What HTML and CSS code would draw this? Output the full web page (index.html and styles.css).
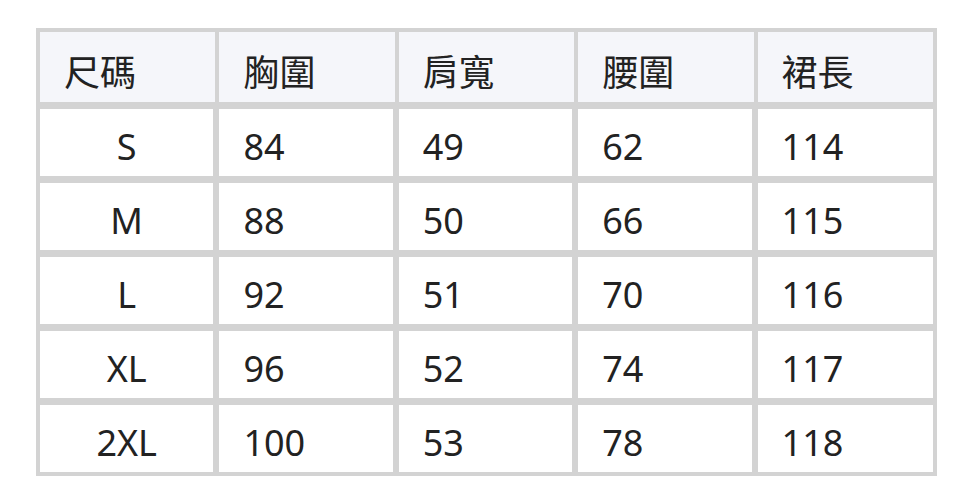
FILE: index.html
```html
<!DOCTYPE html>
<html lang="zh-Hant">
<head>
<meta charset="utf-8">
<title>尺碼表</title>
<link rel="stylesheet" href="styles.css">
</head>
<body>
<table class="size-table">
  <thead>
    <tr><th>尺碼</th><th>胸圍</th><th>肩寬</th><th>腰圍</th><th>裙長</th></tr>
  </thead>
  <tbody>
    <tr><td class="size">S</td><td>84</td><td>49</td><td>62</td><td>114</td></tr>
    <tr><td class="size">M</td><td>88</td><td>50</td><td>66</td><td>115</td></tr>
    <tr><td class="size">L</td><td>92</td><td>51</td><td>70</td><td>116</td></tr>
    <tr><td class="size">XL</td><td>96</td><td>52</td><td>74</td><td>117</td></tr>
    <tr><td class="size">2XL</td><td>100</td><td>53</td><td>78</td><td>118</td></tr>
  </tbody>
</table>
</body>
</html>
```

FILE: styles.css
```css
html, body {
  margin: 0;
  padding: 0;
  background: #ffffff;
}

body {
  padding: 28px 0 0 36px;
  font-family: "Noto Sans", "Noto Sans CJK TC", sans-serif;
  color: #222222;
}

.size-table {
  width: 901px;
  table-layout: fixed;
  border-collapse: separate;
  border-spacing: 4px;
  background: #d3d3d3;
  font-size: 36px;
}

.size-table th,
.size-table td {
  padding: 0 0 0 24px;
  text-align: left;
  font-weight: normal;
  line-height: 1.36;
  white-space: nowrap;
}

.size-table th {
  height: 70px;
  background: #f5f6fa;
  vertical-align: middle;
  padding-top: 12px;
  box-sizing: border-box;
}

.size-table td {
  height: 70px;
  background: #ffffff;
  border-top: 3px solid #d3d3d3;
  box-sizing: border-box;
  vertical-align: middle;
  padding-top: 10px;
}

.size-table td:not(:last-child) {
  border-right: 2px solid #d3d3d3;
}

.size-table td.size {
  text-align: center;
  padding-left: 0;
}
```
